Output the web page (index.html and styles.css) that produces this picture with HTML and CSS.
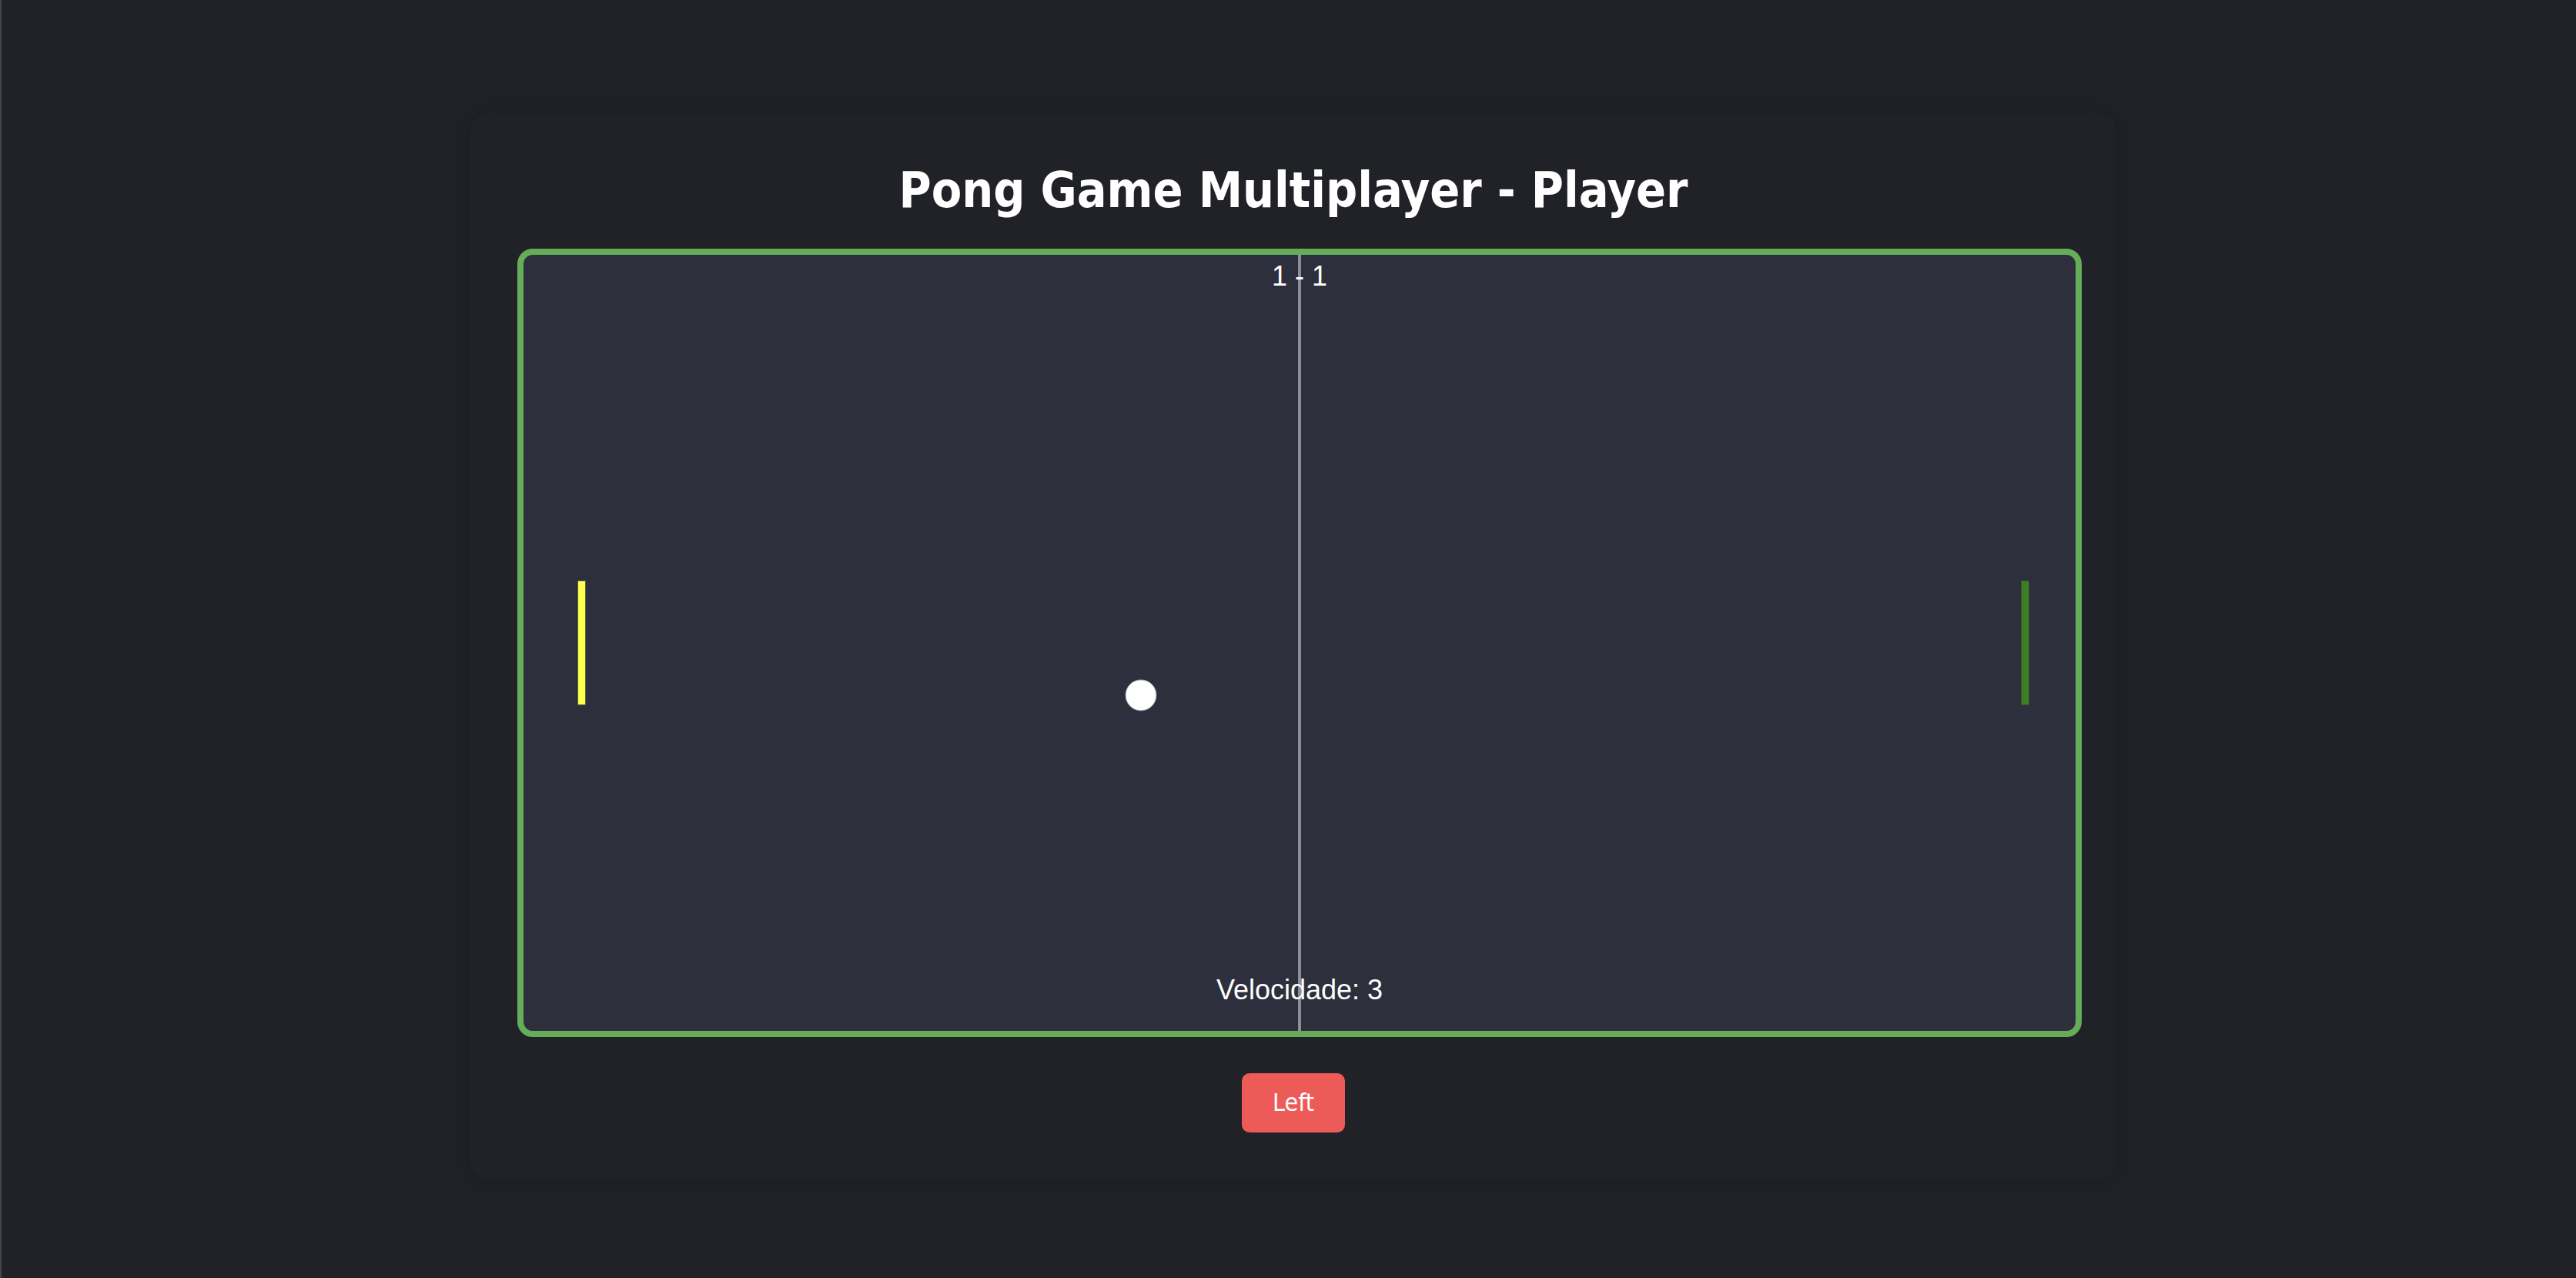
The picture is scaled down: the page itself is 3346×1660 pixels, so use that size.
FILE: index.html
```html
<!DOCTYPE html>
<html lang="pt">
<head>
<meta charset="utf-8">
<title>Pong Game Multiplayer - Player</title>
<link rel="stylesheet" href="styles.css">
</head>
<body>
<main class="page">
  <section class="card">
    <h1 class="title">Pong Game Multiplayer - Player</h1>
    <div class="board">
      <svg class="field" width="2016" height="1008" viewBox="0 0 2016 1008" xmlns="http://www.w3.org/2000/svg">
        <rect x="1006" y="0" width="4" height="1008" fill="#8d8e97"/>
        <text class="score" x="1008" y="40" text-anchor="middle">1 - 1</text>
        <rect x="70.5" y="423.5" width="10" height="161" fill="#ffff50" stroke="#5f5f3a" stroke-width="1"/>
        <rect x="1945.5" y="423.5" width="10" height="161" fill="#3c7f23" stroke="#35512f" stroke-width="1"/>
        <circle cx="802" cy="572" r="20" fill="#ffffff" stroke="#9a9ba3" stroke-width="1"/>
        <text class="speed" x="1008" y="967" text-anchor="middle">Velocidade: 3</text>
      </svg>
    </div>
    <div class="actions">
      <button class="btn-left" type="button">Left</button>
    </div>
  </section>
</main>
</body>
</html>
```
FILE: styles.css
```css
html, body {
  margin: 0;
  padding: 0;
}

body {
  background: #212227;
  border-left: 2px solid #45464c;
  min-height: 1660px;
  box-sizing: border-box;
  font-family: "DejaVu Sans Condensed", "DejaVu Sans", sans-serif;
  font-stretch: condensed;
  color: #ffffff;
}

.page {
  padding-top: 147px;
  padding-left: 609px;
}

.card {
  width: 2138px;
  box-sizing: border-box;
  padding: 63px 45px 62px 61px;
  background: #212227;
  border-radius: 24px;
  box-shadow: 0 0 36px rgba(0, 0, 0, 0.2);
}

.title {
  margin: 0 0 39px -16px;
  font-size: 64px;
  line-height: 74px;
  font-weight: bold;
  text-align: center;
}

.board {
  width: 2032px;
  height: 1024px;
  box-sizing: border-box;
  border: 8px solid #66ad5a;
  border-radius: 20px;
  background: #2d2f3d;
  overflow: hidden;
}

.field {
  display: block;
}

.score, .speed {
  font-family: "Liberation Sans", Arial, sans-serif;
  font-size: 36px;
  fill: #ffffff;
}

.actions {
  display: flex;
  justify-content: center;
  margin-top: 47px;
  padding-right: 16px;
}

.btn-left {
  font-family: "DejaVu Sans Condensed", "DejaVu Sans", sans-serif;
  font-stretch: condensed;
  font-size: 32px;
  line-height: 37px;
  color: #ffffff;
  background: #ec5b57;
  border: none;
  border-radius: 10px;
  padding: 20px 40px;
  width: 134px;
  height: 77px;
  box-sizing: border-box;
  cursor: pointer;
}
```
